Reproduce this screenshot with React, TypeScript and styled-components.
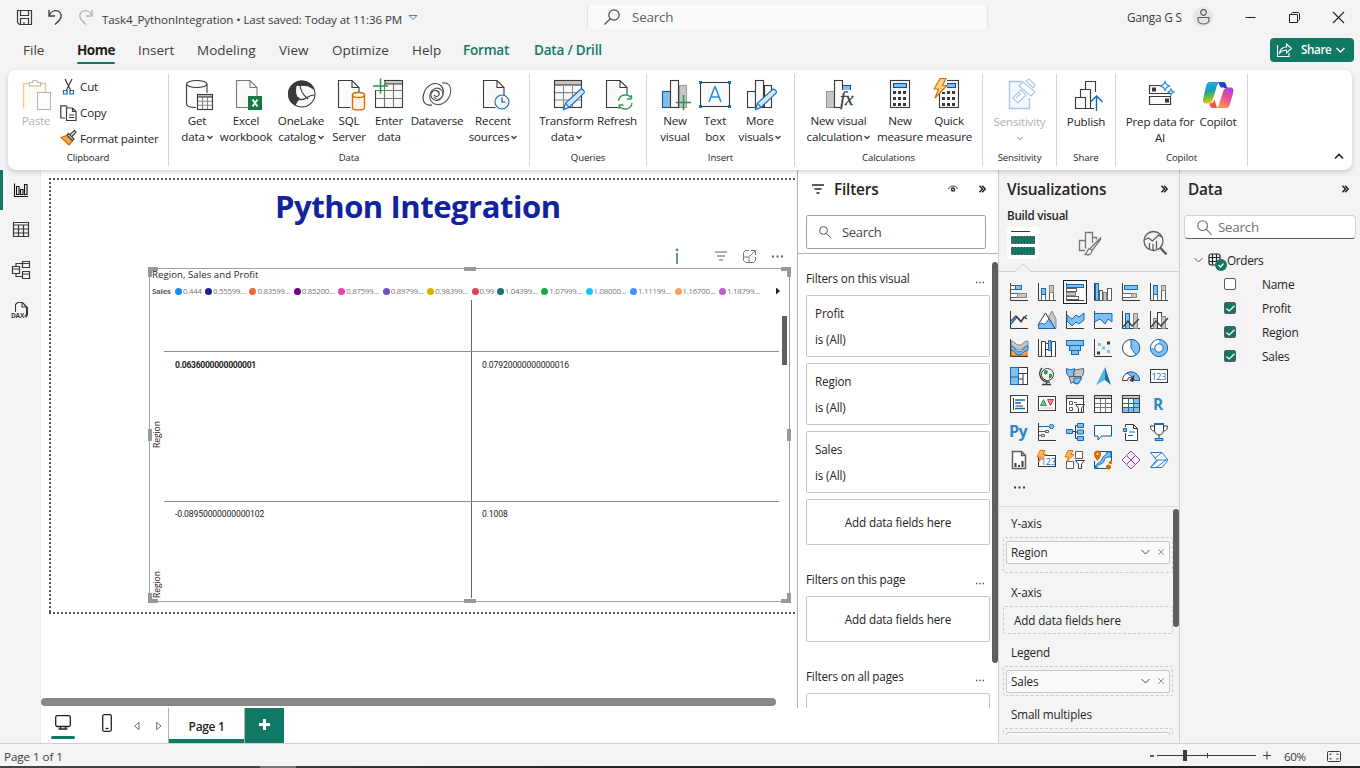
import React from "react";
import styled, { createGlobalStyle } from "styled-components";

const INK = "#252423";
const GREEN = "#117865";
const BLUE = "#0f6cbd";
const SKY = "#83beec";
const NAVY = "#005a9e";
const GREY = "#c8c6c4";
const DARK = "#3b3a39";
const ORANGE = "#d86c00";

const Global = createGlobalStyle`
  * { box-sizing: border-box; }
  html, body { margin: 0; padding: 0; height: 100%; overflow: hidden; }
  body { font-family: "Open Sans", "Noto Sans", sans-serif; font-size: 11.6px; color: ${INK}; letter-spacing: -0.2px; background: #f4f4f4; }
  svg { display: block; flex: none; overflow: visible; }
`;

const Window = styled.div`
  width: 1360px; height: 768px; display: flex; flex-direction: column; background: #f4f4f4; overflow: hidden;
`;

/* ---------- title bar ---------- */
const TitleBar = styled.header`
  display: flex; height: 34px; flex: none; white-space: nowrap;
`;
const QuickTools = styled.div`
  width: 587px; flex: none; display: flex; align-items: flex-start; padding: 8px 0 0 16px;
`;
const QuickIcon = styled.div<{ $w: number }>`width: ${p => p.$w}px; flex: none;`;
const DocName = styled.div<{ $w: number }>`
  width: ${p => p.$w}px; flex: none; line-height: 16px; padding-top: 4px; color: #3b3a39; letter-spacing: -0.11px;
`;
const TopSearch = styled.div`
  width: 401px; flex: none; height: 26px; margin-top: 4px; background: #fafafa; border-radius: 3px; display: flex; align-items: center;
  padding-left: 16px; gap: 12px; font-size: 13.4px; color: #605e5c; border: 1px solid #f4f4f4; border-left-color: #e4e4e4; border-right-color: #e4e4e4;
`;
const WindowArea = styled.div`flex: 1; display: flex; align-items: center; height: 34px; padding-left: 139px;`;
const UserName = styled.span`width: 66px; flex: none; font-size: 11.8px; color: #3b3a39;`;
const Avatar = styled.div`
  width: 20px; height: 20px; flex: none; border-radius: 50%; background: #e6e6e6; display: flex; align-items: center; justify-content: center; margin-right: 32px;
`;
const WinBtn = styled.div`width: 44px; flex: none; display: flex;`;

/* ---------- tabs ---------- */
const TabRow = styled.nav`display: flex; height: 36px; flex: none; padding: 4px 6px 0 23px; white-space: nowrap;`;
const Tab = styled.div<{ $w: number; $kind?: "on" | "ctx" }>`
  width: ${p => p.$w}px; font-size: 13.5px; line-height: 24px; letter-spacing: 0;
  color: ${p => (p.$kind === "ctx" ? GREEN : p.$kind === "on" ? "#201f1e" : "#424140")};
  font-weight: ${p => (p.$kind === "on" ? 700 : p.$kind === "ctx" ? 600 : 400)};
  ${p => p.$kind === "on" && "letter-spacing: -0.5px;"}
  ${p => p.$kind === "ctx" && "letter-spacing: -0.2px;"}
`;
const TabUnderline = styled.div`width: 38px; height: 2px; background: ${GREEN}; border-radius: 1px;`;
const ShareBtn = styled.button`
  margin-left: auto; width: 84px; height: 24px; border: 0; border-radius: 4px; background: ${GREEN}; color: #fff; display: flex;
  align-items: center; padding: 0 0 0 6px; font: 600 11.6px "Open Sans", sans-serif; letter-spacing: -0.35px;
`;
const ShareText = styled.span`margin: 0 5px 0 9px; line-height: 24px;`;

/* ---------- ribbon ---------- */
const Ribbon = styled.section`
  margin: 0 8px; height: 100px; flex: none; background: #fff; border-radius: 8px; display: flex; padding: 4px 0;
  box-shadow: 0 2px 5px rgba(0,0,0,.18); position: relative; z-index: 2;
`;
const Group = styled.div<{ $w: number }>`
  width: ${p => p.$w}px; height: 92px; border-right: 1px solid #d6d6d6; display: flex; flex-direction: column; flex: none;
`;
const GroupBody = styled.div`display: flex; height: 76px;`;
const GroupName = styled.div`text-align: center; font-size: 9.6px; line-height: 15px; letter-spacing: -0.1px;`;
const RBtn = styled.div<{ $w: number; $off?: boolean; $drop?: number; $shift?: number }>`
  width: ${p => p.$w}px; display: flex; flex-direction: column; align-items: center; flex: none; padding: 4px 0 0 ${p => p.$shift ?? 0}px;
  opacity: ${p => (p.$off ? 0.36 : 1)};
  svg + div { margin-top: ${p => p.$drop ?? 1}px; }
`;
const Line = styled.div`white-space: nowrap; line-height: 16px; display: flex; align-items: center; gap: 2px; height: 16px; letter-spacing: -0.2px;`;
const ClipList = styled.div`display: flex; flex-direction: column; padding: 0 0 0 2px;`;
const ClipItem = styled.div`display: flex; align-items: center; height: 26px; gap: 3px; white-space: nowrap; letter-spacing: -0.17px; & + & { position: relative; top: 1px; }`;
const Collapse = styled.div`flex: 1; display: flex; justify-content: flex-end; align-items: flex-end; padding: 0 8px 6px 0;`;

/* ---------- body ---------- */
const Body = styled.main`display: flex; height: 573px; flex: none;`;
const Rail = styled.aside`width: 41px; flex: none; display: flex; flex-direction: column; border-right: 1px solid #ececec;`;
const RailItem = styled.div<{ $on?: boolean }>`
  height: 40px; display: flex; align-items: center; padding-left: ${p => (p.$on ? 8 : 11)}px; border-left: ${p => (p.$on ? `3px solid ${GREEN}` : "0")};
`;
const Middle = styled.div`width: 957px; flex: none; background: #fff; display: flex; flex-direction: column;`;
const MiddleTop = styled.div`height: 538px; display: flex;`;
const Stage = styled.div`width: 756px; flex: none; height: 538px; padding: 8px 0 0 8px; display: flex; flex-direction: column; overflow: hidden;`;
const Sheet = styled.div`
  width: 748px; height: 436px; flex: none;
  padding-left: 2px;
  background:
    repeating-linear-gradient(90deg, #555 0 2px, transparent 2px 4px) 0 0 / 100% 2px no-repeat,
    repeating-linear-gradient(90deg, #555 0 2px, transparent 2px 4px) 0 100% / 100% 2px no-repeat,
    repeating-linear-gradient(180deg, #555 0 2px, transparent 2px 4px) 0 0 / 2px 100% no-repeat;
`;
const ReportTitle = styled.h1`
  margin: 0 0 0 224px; padding-top: 7px; width: 300px; font-size: 31px; line-height: 42px; font-weight: 700; color: #12239e; white-space: nowrap; letter-spacing: -0.45px;
`;
const VisualTools = styled.div`height: 24px; margin-top: 17px; padding-left: 624px; display: flex; align-items: center;`;
const ToolSlot = styled.div<{ $w: number }>`width: ${p => p.$w}px; flex: none;`;
const Visual = styled.div`
  position: relative; width: 641px; height: 334px; margin: 0 0 0 98px; border: 1px solid #a0a0a0; display: flex; flex-direction: column;
`;
const Handle = styled.i<{ $x: string; $y: string; $t: string }>`
  position: absolute; background: transparent; border: 0 solid #999;
  width: ${p => (p.$t === "h" ? 12 : p.$t === "v" ? 4 : 10)}px; height: ${p => (p.$t === "h" ? 4 : p.$t === "v" ? 12 : 10)}px;
  ${p => p.$x} ${p => p.$y}
  ${p => (p.$t === "h" || p.$t === "v" ? "background:#999;" : "")}
  ${p => (p.$t.includes("T") ? "border-top-width:4px;" : "")} ${p => (p.$t.includes("B") ? "border-bottom-width:4px;" : "")}
  ${p => (p.$t.includes("L") ? "border-left-width:4px;" : "")} ${p => (p.$t.includes("R") ? "border-right-width:4px;" : "")}
`;
const VisualTitle = styled.div`font-size: 9.6px; line-height: 12px; padding-left: 2px; letter-spacing: 0.06px; z-index: 1;`;
const Legend = styled.div`
  display: flex; align-items: center; height: 12px; margin-top: 4px; padding-left: 2px; font-family: "Open Sans", sans-serif; font-size: 7.8px; color: #777; white-space: nowrap; letter-spacing: -0.22px;
  b { width: 23px; flex: none; color: #605e5c; font-weight: 700; }
`;
const LegendItem = styled.span<{ $c: string; $w: number }>`
  width: ${p => p.$w}px; flex: none; display: flex; align-items: center; gap: 1px;
  &::before { content: ""; width: 7px; height: 7px; flex: none; border-radius: 50%; background: ${p => p.$c}; }
`;
const Matrix = styled.div`display: flex; margin-top: 3px; height: 298px;`;
const AxisCol = styled.div`width: 14px; margin-top: -1px; display: flex; flex-direction: column;`;
const AxisName = styled.div`
  height: 149px; writing-mode: vertical-rl; transform: rotate(180deg); font-size: 8.6px; line-height: 14px; letter-spacing: -0.1px; color: #222;
  & + & { height: 150px; }
`;
const CellGrid = styled.div`
  width: 615px; flex: none; display: grid; grid-template-columns: 307px 308px; grid-template-rows: 150px 148px;
  background: linear-gradient(#666, #666) 307px 0 / 1px 100% no-repeat;
`;
const Cell = styled.div<{ $b?: boolean }>`
  display: flex; flex-direction: column; font-family: Roboto, sans-serif; font-size: 8.6px; letter-spacing: ${p => (p.$b ? -0.3 : -0.12)}px; color: #222; font-weight: ${p => (p.$b ? 700 : 400)};
  &::before { content: ""; height: 51px; border-bottom: 1px solid #8c8c8c; }
  span { padding: 7px 0 0 11px; line-height: 12px; }
  &:nth-child(n+3)::before { height: 51px; }
  &:nth-child(n+3) span { padding-top: 6px; }
`;
const CellBar = styled.div`width: 5px; height: 49px; margin: 16px 0 0 3px; background: #605e5c;`;
const HScroll = styled.div`width: 735px; height: 8px; border-radius: 4px; background: #8a8886; margin: 84px 0 0 -8px; flex: none;`;

/* ---------- page tabs ---------- */
const PageBar = styled.div`height: 35px; display: flex; align-items: flex-start;`;
const ViewMode = styled.div<{ $w: number; $pad: number; $top: number }>`width: ${p => p.$w}px; padding: ${p => p.$top}px 0 0 ${p => p.$pad}px;`;
const ViewUnder = styled.div`width: 24px; height: 3px; border-radius: 1.5px; background: ${GREEN}; margin: 6px 0 0 -4px;`;
const PageTab = styled.div`
  width: 77px; height: 35px; border: solid #b3b0ad; border-width: 0 1px; box-shadow: inset 0 -4px 0 ${GREEN}; text-align: center; line-height: 37px; font-weight: 600; letter-spacing: -0.35px; font-size: 12px;
`;
const AddPage = styled.div`width: 39px; height: 35px; background: ${GREEN}; display: flex; align-items: center; justify-content: center; padding-bottom: 2px;`;

/* ---------- filters ---------- */
const Filters = styled.section`width: 201px; flex: none; height: 538px; border-left: 1px solid #b3b0ad; display: flex; flex-direction: column; overflow: hidden;`;
const PanelHead = styled.div`
  height: 38px; flex: none; display: flex; align-items: center; font-size: 15.4px; font-weight: 600; letter-spacing: -0.2px;
`;
const Grow = styled.div`flex: 1;`;
const FilterSearch = styled.div`
  margin: 7px 0 0 8px; width: 180px; height: 34px; flex: none; border: 1px solid #a19f9d; border-radius: 2px; display: flex; align-items: center; gap: 11px; padding-left: 12px; font-size: 13px; color: #484644; letter-spacing: -0.3px;
`;
const FilterScroll = styled.div`margin-top: 4px; flex: 1; border-top: 1px solid #b3b0ad; display: flex; overflow: hidden;`;
const FilterCol = styled.div`width: 184px; margin: 0 2px 0 8px; flex: none; display: flex; flex-direction: column; gap: 6px;`;
const Section = styled.div<{ $h: number }>`
  height: ${p => p.$h}px; flex: none; display: flex; align-items: flex-end; justify-content: space-between; padding: 0 6px 3px 0; line-height: 16px; letter-spacing: -0.16px; font-size: 11.7px;
  svg { margin-bottom: 2px; }
`;
const Card = styled.div<{ $h?: number }>`
  height: ${p => p.$h ?? 62}px; flex: none; border: 1px solid #c8c6c4; border-radius: 2px; display: flex; flex-direction: column; justify-content: center; padding: 0 8px ${p => (p.$h ? 0 : 1)}px; line-height: 26px; text-align: ${p => (p.$h ? "center" : "left")}; font-size: 11.7px; letter-spacing: -0.15px;
`;
const VBar = styled.div<{ $t: number; $h: number }>`width: 6px; height: ${p => p.$h}px; margin-top: ${p => p.$t}px; background: #605e5c; border-radius: 3px; flex: none;`;

/* ---------- visualizations ---------- */
const Viz = styled.section`width: 182px; border: solid #d0d0d0; border-width: 0 1px; flex: none; display: flex; flex-direction: column; overflow: hidden;`;
const BuildLabel = styled.div`font-weight: 600; padding-left: 8px; line-height: 16px; height: 16px; font-size: 11.6px; letter-spacing: -0.25px;`;
const ModeRow = styled.div`display: flex; justify-content: space-between; padding: 3px 8px 0 8px; height: 46px; align-items: flex-start;`;
const Mode = styled.div<{ $on?: boolean }>`width: 32px; height: 32px; border-radius: 3px; background: ${p => (p.$on ? "#fff" : "transparent")}; display: flex; align-items: center; justify-content: center;`;
const Notch = styled.div`height: 10px; margin-top: -7px;`;
const VizGrid = styled.div`display: grid; grid-template-columns: repeat(6, 28px); grid-auto-rows: 28px; padding: 5px 0 0 6px;`;
const VizCell = styled.div<{ $on?: boolean }>`
  display: flex; align-items: center; justify-content: center; width: 28px; height: 28px;
  svg { outline: ${p => (p.$on ? "1px solid #222" : "0")}; outline-offset: 1px; background: ${p => (p.$on ? "#fff" : "none")}; }
`;
const More = styled.div`height: 32px; padding: 12px 0 0 15px;`;
const Wells = styled.div`flex: none; height: 229px; border-top: 1px solid #dedede; display: flex; overflow: hidden;`;
const WellCol = styled.div`width: 170px; margin-left: 4px; flex: none;`;
const WellName = styled.div<{ $h: number }>`height: ${p => p.$h}px; padding: 0 8px 6px; display: flex; align-items: flex-end; line-height: 16px; font-size: 11.7px; letter-spacing: -0.14px;`;
const Well = styled.div<{ $h: number }>`height: ${p => p.$h}px; border: 1px dashed #ccc; border-radius: 2px; padding: 3px 2px; font-size: 11.7px; letter-spacing: -0.12px;`;
const WellItem = styled.div`height: 23px; border: 1px solid #c8c6c4; border-radius: 2px; background: #fafafa; display: flex; align-items: center; padding: 0 5px 1px 4px; gap: 8px; span { flex: 1; }`;
const WellHint = styled.div`line-height: 20px; padding-left: 8px;`;

/* ---------- data ---------- */
const DataPane = styled.section`width: 180px; display: flex; flex-direction: column;`;
const DataSearch = styled.div`
  margin: 7px 0 0 4px; width: 172px; height: 24px; background: #fff; border: 1px solid #d1d1d1; border-bottom-color: #616161; border-radius: 4px; display: flex; align-items: center; gap: 6px; padding-left: 12px; font-size: 13.3px; color: #707070; letter-spacing: -0.2px;
`;
const TableRow = styled.div`display: flex; align-items: center; height: 24px; padding-left: 14px; margin-top: 9px; font-size: 11.8px; letter-spacing: -0.32px;`;
const FieldRow = styled.div`display: flex; align-items: center; height: 24px; padding-left: 44px; gap: 26px; font-size: 11.9px; letter-spacing: -0.22px;`;
const Check = styled.div<{ $on: boolean }>`
  width: 12px; height: 12px; border-radius: 2px; border: 1px solid #5a5a5a; background: ${p => (p.$on ? GREEN : "#fff")}; display: flex; align-items: center; justify-content: center;
`;

/* ---------- status ---------- */
const Status = styled.footer`height: 23px; flex: none; border-top: 1px solid #d0d0d0; display: flex; align-items: center; padding: 3px 19px 0 4px; color: #3b3a39; letter-spacing: -0.05px;`;
const Slider = styled.div`margin: -3px -2px 0 0;`;
const Zoom = styled.span`width: 43px; margin-left: 13px; letter-spacing: -0.4px;`;
const Taskbar = styled.div`height: 2px; flex: none; background: linear-gradient(90deg, #444 0 260px, #777 260px 296px, #3a3a3a 296px, #222 600px);`;

/* ---------- icons ---------- */
const Big = ({ children }: { children: React.ReactNode }) => (
  <svg width="32" height="34" viewBox="0 0 32 34" fill="none" stroke={DARK} strokeWidth="1.1">{children}</svg>
);
const Doc = ({ x = 5.5 }: { x?: number }) => (
  <path d={`M${x + 12} 29.5H${x}V2.5h13.5l7 7V18M${x + 13.5} 2.5v7h7`} fill="#fafafa" />
);
const TableG = ({ x, y, s }: { x: number; y: number; s: number }) => (
  <g>
    <rect x={x} y={y} width={s} height={s} fill="#fafafa" stroke="none" />
    <path d={`M${x} ${y + s * 0.45}h${s}M${x} ${y + s * 0.72}h${s}M${x + s / 3} ${y + s / 5}v${s * 0.8}M${x + (2 * s) / 3} ${y + s / 5}v${s * 0.8}`} stroke="#8a8886" />
    <rect x={x} y={y} width={s} height={s / 6} fill={GREY} stroke="none" />
    <rect x={x} y={y} width={s} height={s} />
    <path d={`M${x} ${y + s / 6}h${s}`} />
  </g>
);
const Pencil = ({ dx = 0 }: { dx?: number }) => (
  <path transform={`translate(${dx} 0)`} d="M0.5 31.5l2-6.5L17.5 11.5c1.5-1.3 5 1.5 3.5 3.6L6 29.5zM2.5 25l3.5 4.5" fill="#cfe6f8" stroke={BLUE} />
);
const Calc = ({ x }: { x: number }) => (
  <g>
    <rect x={x} y="2.5" width="19" height="27" fill="#fafafa" />
    <rect x={x + 3} y="5.5" width="13" height="4" fill={SKY} stroke={NAVY} />
    {[13, 19, 25].map(y => [3, 8, 13].map(dx => <rect key={`${y}${dx}`} x={x + dx - 0.5} y={y} width="3" height="3" fill={DARK} stroke="none" />))}
  </g>
);
const Chev = ({ c = DARK }: { c?: string }) => (
  <svg width="6" height="5" viewBox="0 0 6 5" fill="none" stroke={c} strokeWidth="1.3"><path d="M0.5 1l2.5 2.5L5.5 1" /></svg>
);
const WideChev = ({ c = DARK, s = 1.2 }: { c?: string; s?: number }) => (
  <svg width="9" height="6" viewBox="0 0 9 6" fill="none" stroke={c} strokeWidth={s}><path d="M0.5 1l4 4 4-4" /></svg>
);
const DblChev = () => (
  <svg width="7" height="8" viewBox="0 0 7 8" fill="none" stroke={INK} strokeWidth="1.5"><path d="M0.5 .7L3.5 4 .5 7.3M3.2 .7L6.2 4 3.2 7.3" /></svg>
);
const Lens = ({ s, flip, c = "#484644" }: { s: number; flip?: boolean; c?: string }) => (
  <svg width={s} height={s} viewBox="0 0 16 16" fill="none" stroke={c} strokeWidth="1.2">
    <g transform={flip ? "translate(16 0) scale(-1 1)" : undefined}><circle cx="6" cy="6" r="5.2" /><path d="M9.7 9.7L15.5 15.5" /></g>
  </svg>
);
const Dots = ({ c = DARK, w = 11 }: { c?: string; w?: number }) => (
  <svg width={w} height="3" viewBox="0 0 11 3" fill={c}><path d="M0 .5h2v2H0zM4.5 .5h2v2h-2zM9 .5h2v2H9z" /></svg>
);
const X = ({ s, c = INK, w = 1 }: { s: number; c?: string; w?: number }) => (
  <svg width={s} height={s} viewBox="0 0 10 10" stroke={c} strokeWidth={w}><path d="M0 0l10 10M10 0L0 10" /></svg>
);

const ico = {
  getData: <Big><path d="M5.5 6v20c0 2 4 3.5 10 3.5V15h10V6z" fill="#fafafa" stroke="none" /><path d="M5.5 6v20c0 2 4 3.5 9.5 3.5M26 6v9" /><ellipse cx="15.7" cy="6" rx="10.2" ry="3.5" fill="#fafafa" /><TableG x={16.5} y={16.5} s={15} /></Big>,
  excel: <Big><g stroke="#797775"><Doc x={6.5} /></g><rect x="18" y="18" width="14" height="14" fill="#107c41" stroke="none" /><path d="M22.5 21.5l5 7M27.5 21.5l-5 7" stroke="#fff" strokeWidth="2" /></Big>,
  oneLake: <Big><circle cx="17" cy="16" r="13" fill="#fafafa" /><path d="M13 4C6 6 3.5 11 3.5 16c0 5 2.5 9 6.5 11 1-3 3-5 4-6-4-3-5-11-1-17z" fill={DARK} /><path d="M10 5c5-3.5 15-2 18 5.5-4-3-8-4-12-3-3 0-6-.5-6-2.5z" fill={DARK} /><path d="M15 6c0 6 3 11 8 15M11 19c4 4 8 3 12 0 3-2 4-2 6.5-2M10 26.5c1-4 2-5 4-7" /></Big>,
  sql: <Big><Doc x={5.5} /><path d="M19.5 17v13c0 2.5 12 2.5 12 0V17z" fill="#fff4e6" stroke={ORANGE} strokeWidth="1.4" /><ellipse cx="25.5" cy="17" rx="6" ry="2.5" fill="#fff" stroke={ORANGE} strokeWidth="1.4" /></Big>,
  enter: <Big><rect x="2.5" y="2.5" width="27" height="27" fill="#fafafa" /><path d="M2.5 12.5h27M2.5 20.5h27M11.5 6v23M20.5 6v23" stroke="#797775" /><path d="M12 2.5h17.5V6H12z" fill={GREY} /><rect x="1" y="1" width="10" height="11" fill="#fff" stroke="none" /><path d="M7.5 0.5v15M0 8h15" stroke="#1a9a42" strokeWidth="1.5" /></Big>,
  dataverse: <Big><path d="M11 27C3 28 .5 22 3 15 5 8 13 3 19 7c5 3 4 12-1 15-6 2-10-4-7-8 3-3 8-1 7 3-1 2-4 2-5 0" /><path d="M21 5c8-1 10 5 8 12-3 8-11 12-17 8-5-4-4-11 1-14 6-3 11 3 8 8-2 3-6 3-8 0" stroke="#605e5c" /></Big>,
  recent: <Big><Doc x={6.5} /><circle cx="25" cy="24" r="7" fill="#f3f9fd" stroke={BLUE} /><path d="M25 19.5V24h3.5" /></Big>,
  transform: <Big><TableG x={3.5} y={2.5} s={27} /><Pencil dx={12} /></Big>,
  refresh: <Big><Doc x={5.5} /><rect x="17" y="17" width="15" height="14" fill="#fff" stroke="none" /><path d="M17.5 23c1-7 10-8 13-2.5V17M30.5 21H26M31 25c-1 7-10 8-13 2.5V31M18 27h4.5" stroke="#2f9e4f" strokeWidth="1.4" /></Big>,
  newVisual: <Big><rect x="3.5" y="13.5" width="8" height="16" fill={SKY} stroke={NAVY} /><rect x="20.5" y="7.5" width="7" height="22" fill={GREY} stroke="#a19f9d" /><rect x="11.5" y="2.5" width="8" height="27" fill="#fafafa" /><path d="M24.5 17v15M17 24.5h15" stroke="#1a9a42" strokeWidth="1.5" /></Big>,
  textBox: <Big><rect x="1.5" y="4.5" width="29" height="24" fill="#fafafa" /><path d="M10 24l5.7-15h.6L22 24M12 19h8" stroke="#2b88d8" strokeWidth="1.5" />{[[0, 3], [29, 3], [0, 27], [29, 27]].map(([x, y]) => <rect key={`${x}${y}`} x={x} y={y} width="3" height="3" fill={BLUE} stroke="none" />)}</Big>,
  moreVisuals: <Big><rect x="3.5" y="13.5" width="8" height="16" fill="#fafafa" /><rect x="20.5" y="7.5" width="7" height="22" fill="#fafafa" /><rect x="11.5" y="2.5" width="8" height="27" fill="#fafafa" /><Pencil dx={11} /></Big>,
  calcVisual: <Big><rect x="3.5" y="13.5" width="8" height="16" fill={GREY} stroke="#979593" /><path d="M19.5 29V7.5h8V16" fill={SKY} stroke={NAVY} /><rect x="11.5" y="2.5" width="8" height="27" fill="#fafafa" /><rect x="17" y="12" width="15" height="19" fill="#fff" stroke="none" /><text x="17" y="27" fontFamily="Liberation Serif" fontStyle="italic" fontSize="19" fill={DARK} stroke={DARK} strokeWidth=".3">fx</text></Big>,
  newMeasure: <Big><Calc x={6.5} /></Big>,
  quick: <Big><Calc x={6.5} /><rect x="5" y="1" width="9" height="13" fill="#fff" stroke="none" /><path d="M7 .5h6L9.5 7.5H14L2 20l3.5-9H1z" fill="#ffd28a" stroke={ORANGE} /></Big>,
  sens: <Big><path d="M18 3.5H5.5v27h20V20" fill="#deecf9" stroke={BLUE} strokeWidth="1.4" /><path d="M9 20l8-8 5 5-8 8zM12 20l5-5M15 8l4-4 12 10-4 4zM22 3l3-2 6 6-2 3z" fill="#fff" stroke={BLUE} /></Big>,
  publish: <Big><path d="M5.5 19.5h10v11h-10zM10.5 19v-7.5h10v19h-5M15.5 11V3.5h10V14M20.5 30.5H24" fill="#fafafa" /><path d="M26.5 33V18M20.5 24l6-6 6 6" stroke={BLUE} strokeWidth="1.4" /></Big>,
  prep: <Big><path d="M17 7.5H5.5v8H27v-2M5.5 18.5h21v8h-21z" fill="#fafafa" strokeWidth="1.2" /><path d="M8 9.5h4v4H8zM21 20.5h4v4h-4z" fill={DARK} stroke="none" /><path d="M21 3.5l1.5 3 3 1.5-3 1.5-1.5 3-1.5-3-3-1.5 3-1.5zM27 11l1 2 2 1-2 1-1 2-1-2-2-1 2-1z" fill="#fff" stroke="#2b88d8" strokeWidth="1.2" /></Big>,
  copilot: (
    <svg width="32" height="34" viewBox="0 0 32 34">
      <defs>
        <linearGradient id="ca" x1="0" y1="0" x2=".2" y2="1"><stop offset="0" stopColor="#1fb6ee" /><stop offset=".45" stopColor="#1a9bb5" /><stop offset=".75" stopColor="#6bbf3f" /><stop offset="1" stopColor="#f5c400" /></linearGradient>
        <linearGradient id="cb" x1=".8" y1="0" x2=".3" y2="1"><stop offset="0" stopColor="#a347e8" /><stop offset=".45" stopColor="#e64f9a" /><stop offset="1" stopColor="#ff9a4c" /></linearGradient>
      </defs>
      <path d="M16 4h5c2.5 0 3 2 3.5 4 .4 1.5 1 2 2.5 2h-8z" fill="#1846c8" />
      <path d="M8 4h11c-3 0-4 3-5 7l-3 10c-.8 3-2 4.500-5 4.500H4c-3 0-3.5-2.500-2.600-5.500L4 8c.8-2.500 1.600-4 4-4z" fill="url(#ca)" />
      <path d="M24 30H13c3 0 4-3 5-7l3-9c.8-3 2-4.500 5-4.500h2.500c3 0 3.500 2.500 2.600 5.500L28 26c-.8 2.500-1.600 4-4 4z" fill="url(#cb)" />
      <path d="M15 30H11c-2.500 0-3-2-3.500-4-.2-.5-.5-.5-.5-.5 3 0 4.500-1 5.500-4z" fill="#f0554b" />
      <path d="M16 11l3-1.500h3L17.500 22.500h-4.500z" fill="#fff" />
    </svg>
  ),
};

const btn = (icon: React.ReactNode, w: number, a: string, b?: string, chev?: boolean) => ({ icon, w, a, b, chev });
const groups = [
  { name: "Data", w: 361, items: [btn(ico.getData, 56, "Get", "data", true), btn(ico.excel, 42, "Excel", "workbook"), btn(ico.oneLake, 68, "OneLake", "catalog", true), btn(ico.sql, 28, "SQL", "Server"), btn(ico.enter, 52, "Enter", "data"), btn(ico.dataverse, 44, "Dataverse"), btn(ico.recent, 68, "Recent", "sources", true)] },
  { name: "Queries", w: 117, items: [btn(ico.transform, 73, "Transform", "data", true), btn(ico.refresh, 28, "Refresh")] },
  { name: "Insert", w: 148, items: [btn(ico.newVisual, 56, "New", "visual"), btn(ico.textBox, 24, "Text", "box"), btn(ico.moreVisuals, 66, "More", "visuals", true)] },
  { name: "Calculations", w: 188, items: [btn(ico.calcVisual, 87, "New visual", "calculation", true), btn(ico.newMeasure, 36, "New", "measure"), btn(ico.quick, 62, "Quick", "measure")] },
  { name: "Sensitivity", w: 74, items: [btn(ico.sens, 73, "Sensitivity", "", true)] },
  { name: "Share", w: 59, items: [btn(ico.publish, 58, "Publish")] },
  { name: "Copilot", w: 132, items: [btn(ico.prep, 88, "Prep data for", "AI"), btn(ico.copilot, 28, "Copilot")] },
];

/* chart gallery, 20 × 20 each */
const AX = <path d="M1.5 1v17.5H19" />;
const B = { fill: SKY, stroke: BLUE };
const G = { fill: GREY, stroke: "#8a8886" };
const W = { fill: "#fff", stroke: "#605e5c" };
const bolt = <path d="M3 .5h5L6 4.5h3L1.5 12l2-5H0z" fill="#ffb45c" stroke={ORANGE} strokeWidth=".9" />;
const funnel = <path d="M10.5 10.5h9L16.5 14v4.5h-3V14z" fill="#fff" />;
const charts: React.ReactNode[] = [
  <>{AX}<rect x="1.5" y="3.5" width="5" height="4" {...W} /><rect x="6.5" y="3.5" width="6" height="4" {...B} /><rect x="1.5" y="11.5" width="7" height="4" {...W} /><rect x="8.5" y="11.5" width="9" height="4" {...G} /></>,
  <>{AX}<rect x="4.5" y="12.5" width="4" height="6" {...W} /><rect x="4.5" y="6.5" width="4" height="6" {...B} /><rect x="12.5" y="10.5" width="4" height="8" {...W} /><rect x="12.5" y="3.5" width="4" height="7" {...G} /></>,
  <>{AX}<rect x="1.5" y="2.5" width="17" height="3" {...B} /><rect x="1.5" y="6.5" width="10" height="3" {...W} /><rect x="1.5" y="10.5" width="9" height="3" {...G} /><rect x="1.5" y="14.5" width="12" height="3" {...W} /></>,
  <>{AX}<rect x="2.5" y="1.5" width="3" height="17" {...B} /><rect x="6.5" y="8.5" width="3" height="10" {...W} /><rect x="10.5" y="10.5" width="3" height="8" {...G} /><rect x="14.5" y="6.5" width="4" height="12" {...W} /></>,
  <>{AX}<rect x="3.5" y="3.5" width="13" height="4" {...B} /><rect x="1.5" y="11.5" width="9" height="4" {...W} /><rect x="10.5" y="11.5" width="5" height="4" {...G} /></>,
  <>{AX}<rect x="4.5" y="12.5" width="4" height="6" {...W} /><rect x="4.5" y="3.5" width="4" height="9" {...B} /><rect x="12.5" y="8.5" width="4" height="10" {...W} /><rect x="12.5" y="3.5" width="4" height="5" {...G} /></>,
  <>{AX}<path d="M2 14l6-7 4 4 6-6" stroke={BLUE} strokeWidth="1.3" /><path d="M2 11l5-5 5 6 3-5 3 2" strokeWidth="1.3" /></>,
  <><path d="M12 6l3-5 4 8v9.5H12z" {...G} /><path d="M1 15L8.5 3 18 18.5" fill="#fff" /><path d="M1.5 18.5V15l3-2 3 1.5L12 9l6 9.5z" {...B} /></>,
  <>{AX}<path d="M2 5l5 4 4-4 3 2 5-4v7l-5 4-3-2-4 4-5-5z" {...B} /></>,
  <>{AX}<path d="M1.5 3.5H19V12l-4-3-3 5-5-5-5.5 3z" {...B} /></>,
  <>{AX}<rect x="4.5" y="3.5" width="4" height="15" {...B} /><rect x="12.5" y="3.5" width="4" height="15" {...G} /><path d="M2 17l5-6 4 5 7-7" strokeWidth="1.3" /></>,
  <>{AX}<rect x="4.5" y="8.5" width="4" height="10" {...G} /><rect x="8.5" y="2.5" width="4" height="16" fill="#fff" /><rect x="12.5" y="6.5" width="4" height="12" {...G} /><path d="M2 17l5-6 5 5 7-8" strokeWidth="1.3" /></>,
  <><path d="M2 12l4 2h8l4-2v6H2z" fill="#f4a24a" stroke={ORANGE} /><path d="M2 3c4 0 4 4 8 4s4-4 9-4v5c-5 0-5 4-9 4s-4-4-8-4z" {...G} /><path d="M2 8c4 0 4 6 8 6s5-6 9-6v4c-4 0-5 5-9 5s-4-5-8-5z" {...B} />{AX}</>,
  <>{AX}<path d="M4.5 18.5v-15h4v15M14.5 18.5v-15h4v15" fill="#fff" /><path d="M8.5 5.5h3v6h-3z" fill="#fff" /><path d="M11.5 2.5h2.500v10h-2.500z" {...B} /></>,
  <><rect x="1.5" y="2.5" width="17" height="5" {...B} /><rect x="4.5" y="7.5" width="11" height="5" {...B} /><rect x="6.5" y="12.5" width="7" height="4" {...B} /></>,
  <>{AX}<g stroke="none"><path d="M5 5h3v3H5zM9 8.500h3v3H9z" fill="#83beec" /><path d="M14 3.500h3v3h-3zM4 13.500h3v3H4z" fill={DARK} /><path d="M14 12h3v3h-3z" fill="#83beec" /></g></>,
  <><circle cx="10" cy="10" r="8.5" fill="#fff" /><path d="M10 10V1.500A8.500 8.500 0 0 1 15 17z" {...B} /></>,
  <><circle cx="10" cy="10" r="6.5" stroke={SKY} strokeWidth="4.5" /><path d="M10 3.500A6.500 6.500 0 0 0 3.500 10" stroke="#fff" strokeWidth="4" /><circle cx="10" cy="10" r="8.6" stroke={BLUE} /><circle cx="10" cy="10" r="4.2" stroke={BLUE} /></>,
  <><rect x="1.5" y="1.5" width="17" height="17" fill="#fff" /><path d="M1.5 1.5h8v17h-8zM1.5 11h8" {...B} /><path d="M9.5 7.5h9M14 7.5v11M9.5 13h4.5" /></>,
  <><circle cx="10.5" cy="8.5" r="6" fill="#fff" /><path d="M7 5c2-2 4-1 4 1S8 9 7 8zM12 8c2-1 4 0 3 3l-3 2z" fill="#2f9e4f" stroke="none" /><path d="M5 2C0 8 4 17 13 16M9.500 16v2.500M5 18.500h9" strokeWidth="1.3" /></>,
  <><path d="M1.500 2.500c4 2 5 1 8 0l-1 8H4C2 9 1 6 1.500 2.500z" {...B} /><path d="M9.500 4l9-1.500c.5 4 0 7-2 8l-8 .5z" fill={GREY} stroke="#605e5c" /><path d="M4 10.500h12l-2 6-3 1.500-3-2-2 1.500z" fill={GREY} stroke="#605e5c" /><path d="M9 12h8l-4 6-4-1z" {...B} /></>,
  <><path d="M12 1L3 19l9-5z" fill="#59b4e6" stroke="none" /><path d="M12 1l6 18-6-5z" fill="#1d6fa5" stroke="none" /></>,
  <><path d="M1.500 14.500a8.500 8.500 0 0 1 17 0h-5a3.500 3.500 0 0 0-7 0z" fill="#fff" /><path d="M6 7a8.500 8.500 0 0 1 12.500 7.500h-5L12 11.500z" {...B} /><path d="M9 14.500l4-5 -1 6z" fill={DARK} /></>,
  <><rect x="1.5" y="3.5" width="17" height="13" fill="#fff" /><text x="2.5" y="13.5" fontSize="9" fontFamily="Open Sans" fill={BLUE} stroke="none" letterSpacing="-.3">123</text></>,
  <><rect x="1.5" y="1.5" width="17" height="17" fill="#fff" /><path d="M4.500 4v12M6.500 12H14" stroke={DARK} /><path d="M6 6h10M6 9h6M6 14.500h10" stroke={BLUE} strokeWidth="1.6" /></>,
  <><rect x="1.5" y="2.5" width="17" height="14" fill="#fff" /><path d="M3.500 11.500l3-6 3 6z" fill="#7bc48c" stroke="#2f9e4f" /><path d="M10.500 5.500h6l-3 6z" fill="#f08a8a" stroke="#d13438" /><path d="M4 14h12" stroke={GREY} /></>,
  <><rect x="1.5" y="1.5" width="17" height="17" fill="#fff" /><path d="M1.500 1.500h17v3h-17z" fill={GREY} /><path d="M4.500 7.500h3v3h-3zM4.500 13.500h3v3h-3zM9 8.500h3" stroke="#605e5c" />{funnel}</>,
  <><rect x="1.5" y="1.5" width="17" height="17" fill="#fff" /><path d="M7.500 5v13.500M12.500 5v13.500M2 9.500h17M2 13.500h17" stroke="#797775" /><path d="M1.500 1.500h17v3h-17z" fill={GREY} /><rect x="1.5" y="1.5" width="17" height="17" /></>,
  <><rect x="1.5" y="1.5" width="17" height="17" fill="#fff" /><path d="M13 5h5.500v13.500h-17V14H13z" fill={SKY} stroke="none" /><path d="M7.500 5v13.500M12.500 5v13.500M2 9.500h17M2 13.500h17" stroke={BLUE} /><path d="M1.500 1.500h17v3h-17z" fill={GREY} /><rect x="1.5" y="1.5" width="17" height="17" /></>,
  <text x="4" y="15.5" fontSize="15.5" fontWeight="700" fontFamily="Open Sans" fill="#2b88c8" stroke="none">R</text>,
  <text x="0" y="15" fontSize="16" fontWeight="700" fontFamily="Open Sans" fill="#2b88c8" stroke="none" letterSpacing="-.5">Py</text>,
  <>{AX}<path d="M2 9.500h7M2 13.500h3" stroke="#605e5c" /><path d="M2 4.500h10" stroke={BLUE} /><circle cx="14.500" cy="4.500" r="2.200" {...B} /><path d="M8.500 8.500h3v2h-3zM4.500 12.500h3v2h-3z" fill="#fff" stroke="#605e5c" /></>,
  <><path d="M7 9.500h3.500M12 3.500h-1.500v13H12M10.500 10H12" /><path d="M1.500 7.500h6v4h-6zM12.500 1.500h6v4h-6zM12.500 8h6v4h-6zM12.500 14.500h6v4h-6z" {...B} /></>,
  <path d="M1.500 3.500h17v10.500H8.500L5 18v-4H1.500z" fill="#fff" stroke={NAVY} />,
  <><path d="M4.500 5V2.500h8l4 4v12h-12V11M12.500 2.500v4h4" fill="#fff" /><path d="M2.500 6.500h3v3h-3z" {...B} /><path d="M8 10h6M7 13.500h5" stroke={BLUE} /></>,
  <><path d="M5.500 1.500h9V8c0 3-2 5-4.500 5S5.500 11 5.500 8zM5.500 4H1.500c0 4 2 5 4 5M14.500 4h4c0 4-2 5-4 5M10 13v3" fill="#fff" /><path d="M5.500 1.500h9v1h-9zM6 16.500h8v2H6z" {...B} /></>,
  <><path d="M3.500 1.500h9l4 4v13h-13zM12.500 1.500v4h4" fill="#fff" stroke="#605e5c" strokeWidth="1.5" /><path d="M6.500 17v-4M10 17v-2M13.500 17v-6" strokeWidth="2" /></>,
  <><rect x="1.5" y="5.5" width="17" height="11" fill="#fff" /><text x="4" y="15" fontSize="9" fontFamily="Open Sans" fill={BLUE} stroke="none" letterSpacing="-.3">123</text>{bolt}</>,
  <><path d="M10.500 1.500h7v7h-7zM1.500 11.500h7v7h-7z" fill="#fff" stroke="#605e5c" />{funnel}{bolt}</>,
  <><path d="M6 1.500h12.500V11M1.500 11v7.500H14" stroke={NAVY} fill="none" /><path d="M4 18c0-5 6-3 7-7s3-4 7-4V2h-4c0 4-4 3-5 7s-6 3-7 9z" {...B} /><path d="M4.500 11C1 7 1 5 1 4a3.500 3.500 0 0 1 7 0c0 1 0 3-3.500 7z" fill={ORANGE} stroke="none" /><circle cx="4.500" cy="4" r="1" fill="#fff" stroke="none" /><circle cx="17.500" cy="12.500" r="1.700" fill={ORANGE} stroke="none" /><circle cx="15.500" cy="17" r="2.500" fill={ORANGE} stroke="none" /></>,
  <path d="M10 1l4.500 4.500L10 10 5.500 5.500zM14.500 5.500L19 10l-4.500 4.500L10 10zM5.500 5.500L10 10l-4.500 4.500L1 10zM10 10l4.500 4.500L10 19l-4.500-4.500z" fill="#fbeffc" stroke="#8c3a9e" />,
  <path d="M1.500 2.500h11.500l6 7.500-6 7.500H1.500L7.500 10zM6 8l7-5.500M7.500 10H19M2 17l7-6.500M8 17l9-7" fill="#fff" stroke="#1a7fd6" />,
];

const legend: [string, string, number][] = [
  ["0.444", "#118dff", 30], ["0.55599...", "#12239e", 44.4], ["0.83599...", "#e66c37", 44.4], ["0.85200...", "#6b007b", 44.4],
  ["0.87599...", "#e044a7", 44.5], ["0.89799...", "#744ec2", 44.5], ["0.98399...", "#d9b300", 44.4], ["0.99", "#d64550", 25.2],
  ["1.04399...", "#197278", 44.4], ["1.07999...", "#1aab40", 44.4], ["1.08000...", "#15c6f4", 44.5], ["1.11199...", "#4092ff", 44.5],
  ["1.16700...", "#ffa058", 44.5], ["1.18799...", "#be5dc9", 57],
];

const FieldPill = ({ name }: { name: string }) => (
  <WellItem><span>{name}</span><WideChev c="#484644" s={1} /><X s={6} c="#8a8886" w={1.5} /></WellItem>
);

export default function App() {
  return (
    <Window>
      <Global />
      <TitleBar>
        <QuickTools>
          <QuickIcon $w={32}><svg width="17" height="18" viewBox="0 0 17 18" fill="none" stroke={DARK} strokeWidth="1.2"><path d="M1.500 2.500h14v14h-12l-2-2zM4.500 2.500v5h8v-5M4.500 16.500v-6h8v6M8 14v2.500" /></svg></QuickIcon>
          <QuickIcon $w={30}><svg width="15" height="18" viewBox="0 0 15 18" fill="none" stroke={DARK} strokeWidth="1.3"><path d="M1 2v6h6M1 8c2-5 6-6 9-5 4 2 4 6 1.500 9L7 16.500" /></svg></QuickIcon>
          <QuickIcon $w={24}><svg width="15" height="18" viewBox="0 0 15 18" fill="none" stroke="#b5b3b1" strokeWidth="1.3"><path d="M14 2v6H8M14 8c-2-5-6-6-9-5-4 2-4 6-1.500 9L8 16.500" /></svg></QuickIcon>
          <DocName $w={306}>Task4_PythonIntegration&nbsp;• Last saved: Today at 11:36 PM</DocName>
          <svg width="10" height="18" viewBox="0 0 10 18" fill="none" stroke="#3a86c0"><path d="M1 7.500h8L5 11.500z" /></svg>
        </QuickTools>
        <TopSearch><Lens s={16} flip />Search</TopSearch>
        <WindowArea>
          <UserName>Ganga G S</UserName>
          <Avatar><svg width="13" height="16" viewBox="0 0 13 16" fill="none" stroke="#605e5c" strokeWidth="1.2"><circle cx="6.500" cy="3.500" r="2.800" /><path d="M1 8.500h11v2c0 6-11 6-11 0z" /></svg></Avatar>
          <WinBtn><svg width="11" height="11" viewBox="0 0 11 11" stroke={INK}><path d="M.5 5.500h10" /></svg></WinBtn>
          <WinBtn><svg width="11" height="11" viewBox="0 0 11 11" fill="none" stroke={INK}><path d="M.5 2.500h8v8h-8zM2.500 2.500V1.500l1-1h6l1 1v6l-1 1H8.500" /></svg></WinBtn>
          <WinBtn><X s={11} /></WinBtn>
        </WindowArea>
      </TitleBar>

      <TabRow>
        <Tab $w={54}>File</Tab>
        <Tab $w={61} $kind="on">Home<TabUnderline /></Tab>
        <Tab $w={59}>Insert</Tab>
        <Tab $w={82}>Modeling</Tab>
        <Tab $w={53}>View</Tab>
        <Tab $w={80}>Optimize</Tab>
        <Tab $w={51}>Help</Tab>
        <Tab $w={71} $kind="ctx">Format</Tab>
        <Tab $w={80} $kind="ctx">Data / Drill</Tab>
        <ShareBtn>
          <svg width="16" height="14" viewBox="0 0 16 14" fill="none" stroke="#fff" strokeWidth="1.1"><path d="M1.500 2v11.500h11.500V10M3.500 10c1-5 4-6 7-6V1l5 4.500-5 4.500V7c-3 0-5 1-7 3z" /></svg>
          <ShareText>Share</ShareText>
          <WideChev c="#fff" s={1.4} />
        </ShareBtn>
      </TabRow>

      <Ribbon>
        <Group $w={161}>
          <GroupBody>
            <RBtn $w={50} $off $shift={6}>
              <Big><path d="M3.500 30.500V5.500h22v10" fill="#fff4e6" stroke={ORANGE} strokeWidth="1.4" /><path d="M9.500 8V4.500h3c0-3 5-3 5 0h3V8z" fill="#fff" /><rect x="17.500" y="14.500" width="13" height="17" fill="#fafafa" /></Big>
              <Line>Paste</Line>
            </RBtn>
            <ClipList>
              <ClipItem><svg width="17" height="16" viewBox="0 0 17 16" fill="none" stroke={DARK} strokeWidth="1.2"><path d="M5 0l5.500 11M12 0L6.500 11" /><path d="M3.500 11.500h3.500v3.500H3.500zM10 11.500h3.500v3.500H10z" stroke={BLUE} /></svg>Cut</ClipItem>
              <ClipItem><svg width="17" height="16" viewBox="0 0 17 16" fill="none" stroke={DARK} strokeWidth="1.2"><path d="M5 13H.8V.8H6l1.500 1.500" /><path d="M6.500 3h6l3.500 3.500V15.500H6.500zM12.500 3v3.500H16M9 10h5M9 12.500h5" fill="#fff" /></svg>Copy</ClipItem>
              <ClipItem><svg width="17" height="16" viewBox="0 0 17 16" fill="none" stroke={DARK} strokeWidth="1.2"><path d="M1 7.500l6-2 5.500 5.500L9 15z" fill="#f9a64a" stroke={ORANGE} /><path d="M7 5l1.500-1.500 5.500 5.500L12.500 10.500zM10 4.500l4.500-4 1.500 1.500-4 4.500" fill="#fff" /></svg>Format painter</ClipItem>
            </ClipList>
          </GroupBody>
          <GroupName>Clipboard</GroupName>
        </Group>
        {groups.map(g => (
          <Group key={g.name} $w={g.w}>
            <GroupBody>
              {g.items.map((it, i) => (
                <RBtn key={i} $w={it.w} $off={g.name === "Sensitivity"} $drop={["Sensitivity", "Share", "Copilot"].includes(g.name) ? 2 : 1}>
                  {it.icon}
                  <Line>{it.a}</Line>
                  {it.b !== undefined && <Line>{it.b}{it.chev && <Chev />}</Line>}
                </RBtn>
              ))}
            </GroupBody>
            <GroupName>{g.name}</GroupName>
          </Group>
        ))}
        <Collapse><svg width="10" height="7" viewBox="0 0 10 7" fill="none" stroke={INK} strokeWidth="1.6"><path d="M1 5.500l4-4 4 4" /></svg></Collapse>
      </Ribbon>

      <Body>
        <Rail>
          <RailItem $on><svg width="20" height="20" viewBox="0 0 20 20" fill="none" stroke="#111" strokeWidth="1.1"><path d="M3.500 3.500v13H17M5.500 6.500h2.500v8H5.500zM9.500 9.500H12v5H9.500zM13.500 4.500H16v10h-2.500z" /></svg></RailItem>
          <RailItem><svg width="20" height="20" viewBox="0 0 20 20" fill="none" stroke={DARK} strokeWidth="1.2"><path d="M2.500 2.500h15v14h-15zM2.500 5h15M2.500 9h15M2.500 13h15M7.500 5v11.500M12.500 5v11.500" /></svg></RailItem>
          <RailItem><svg width="20" height="20" viewBox="0 0 20 20" fill="none" stroke={DARK} strokeWidth="1.2"><path d="M1.500 6.500h7v7h-7zM1.500 9h7M11.500 1.500h7v6h-7zM11.500 3.500h7M11.500 11.500h7v7h-7zM11.500 14h7M5 6.500V3.500h6.500M5 13.500v3h6.500" /></svg></RailItem>
          <RailItem><svg width="20" height="20" viewBox="0 0 20 20" fill="none" stroke={DARK} strokeWidth="1.1"><path d="M4.500 12V4.500l2-2h5l4 4V14c0 1.500-1 2-2 2.500M11 3v4h4.500M13 4.500l3.500 3v7l-1.500 3" /><text x="0" y="17.5" fontSize="6.5" fontWeight="700" fontFamily="Open Sans" fill={DARK} stroke="none" letterSpacing="-.2">DAX</text></svg></RailItem>
        </Rail>

        <Middle>
          <MiddleTop>
            <Stage>
              <Sheet>
                <ReportTitle>Python Integration</ReportTitle>
                <VisualTools>
                  <ToolSlot $w={40}><svg width="4" height="16" viewBox="0 0 4 16" fill="#6a8caf"><circle cx="2" cy="1.700" r="1.500" /><path d="M1 5h2v11H1z" /></svg></ToolSlot>
                  <ToolSlot $w={28}><svg width="12" height="10" viewBox="0 0 12 10" stroke="#605e5c" strokeWidth="1.2"><path d="M0 1h12M2 5h8M4 9h4" /></svg></ToolSlot>
                  <ToolSlot $w={28}><svg width="13" height="13" viewBox="0 0 13 13" fill="none" stroke="#7a7876"><path d="M6 .5H2.500l-2 2v8l2 2h8l2-2V7M8 .5h4.500V5M12.500 .5L6.500 6.500M.5 7h5.500v5.500" /></svg></ToolSlot>
                  <ToolSlot $w={1} />
                  <Dots c="#605e5c" />
                </VisualTools>
                <Visual>
                  <Handle $t="TL" $x="left:-2px;" $y="top:-2px;" />
                  <Handle $t="TR" $x="right:-2px;" $y="top:-2px;" />
                  <Handle $t="BL" $x="left:-2px;" $y="bottom:-2px;" />
                  <Handle $t="BR" $x="right:-2px;" $y="bottom:-2px;" />
                  <Handle $t="h" $x="left:314px;" $y="top:-2px;" />
                  <Handle $t="h" $x="left:314px;" $y="bottom:-2px;" />
                  <Handle $t="v" $x="left:-2px;" $y="top:160px;" />
                  <Handle $t="v" $x="right:-2px;" $y="top:160px;" />
                  <VisualTitle>Region, Sales and Profit</VisualTitle>
                  <Legend>
                    <b>Sales</b>
                    {legend.map(([t, c, w]) => <LegendItem key={t} $c={c} $w={w}>{t}</LegendItem>)}
                    <svg width="5" height="8" viewBox="0 0 5 8" fill="#222"><path d="M0 .5L4 4 0 7.500z" /></svg>
                  </Legend>
                  <Matrix>
                    <AxisCol><AxisName>Region</AxisName><AxisName>Region</AxisName></AxisCol>
                    <CellGrid>
                      <Cell $b><span>0.0636000000000001</span></Cell>
                      <Cell><span>0.07920000000000016</span></Cell>
                      <Cell><span>-0.08950000000000102</span></Cell>
                      <Cell><span>0.1008</span></Cell>
                    </CellGrid>
                    <CellBar />
                  </Matrix>
                </Visual>
              </Sheet>
              <HScroll />
            </Stage>

            <Filters>
              <PanelHead>
                <ToolSlot $w={36}><svg width="36" height="10" viewBox="-14 0 36 10" stroke={INK} strokeWidth="1.3"><path d="M0 1h12M2.500 5h7M4.500 9h3" /></svg></ToolSlot>
                Filters
                <Grow />
                <svg width="10" height="8" viewBox="0 0 10 8" fill="none" stroke={DARK}><path d="M.5 4c1.500-4 7.500-4 9 0" /><circle cx="5" cy="4.500" r="1.500" strokeWidth="1.6" /></svg>
                <ToolSlot $w={21} />
                <DblChev />
                <ToolSlot $w={12} />
              </PanelHead>
              <FilterSearch><Lens s={12} />Search</FilterSearch>
              <FilterScroll>
                <FilterCol>
                  <Section $h={35}>Filters on this visual<Dots c="#605e5c" w={8} /></Section>
                  {["Profit", "Region", "Sales"].map(n => <Card key={n}><div>{n}</div><div>is (All)</div></Card>)}
                  <Card $h={46}>Add data fields here</Card>
                  <Section $h={39}>Filters on this page<Dots c="#605e5c" w={8} /></Section>
                  <Card $h={46}>Add data fields here</Card>
                  <Section $h={39}>Filters on all pages<Dots c="#605e5c" w={8} /></Section>
                  <Card $h={46} />
                </FilterCol>
                <VBar $t={8} $h={401} />
              </FilterScroll>
            </Filters>
          </MiddleTop>

          <PageBar>
            <ViewMode $w={60} $pad={14} $top={7}>
              <svg width="16" height="15" viewBox="0 0 16 15" fill="none" stroke="#222" strokeWidth="1.3"><rect x=".7" y=".7" width="14.6" height="10.8" rx="1.5" /><path d="M5.500 11.500v2.500M10.500 11.500v2.500M3.500 14h9" /></svg>
              <ViewUnder />
            </ViewMode>
            <ViewMode $w={33} $pad={1} $top={6}><svg width="10" height="18" viewBox="0 0 10 18" fill="none" stroke="#222" strokeWidth="1.3"><rect x=".7" y=".7" width="8.6" height="16.6" rx="1.5" /><path d="M3.500 14.500h3" /></svg></ViewMode>
            <ViewMode $w={22} $pad={0} $top={14}><svg width="6" height="8" viewBox="0 0 6 8" fill="none" stroke="#605e5c" strokeWidth=".9"><path d="M5 .2v7.600L.7 4z" /></svg></ViewMode>
            <ViewMode $w={12} $pad={0} $top={14}><svg width="6" height="8" viewBox="0 0 6 8" fill="none" stroke="#605e5c" strokeWidth=".9"><path d="M.7 .2v7.600L5 4z" /></svg></ViewMode>
            <PageTab>Page 1</PageTab>
            <AddPage><svg width="11" height="11" viewBox="0 0 11 11" stroke="#fff" strokeWidth="3"><path d="M5.500 0v11M0 5.500h11" /></svg></AddPage>
          </PageBar>
        </Middle>

        <Viz>
          <PanelHead><ToolSlot $w={8} />Visualizations<Grow /><DblChev /><ToolSlot $w={11} /></PanelHead>
          <BuildLabel>Build visual</BuildLabel>
          <ModeRow>
            <Mode $on><svg width="24" height="26" viewBox="0 0 24 26" fill={GREEN} stroke={DARK}><path d="M0 1.500h19" /><rect x=".5" y="6.500" width="23" height="7" strokeDasharray="2 1" /><rect x=".5" y="17.500" width="23" height="7" strokeDasharray="2 1" /></svg></Mode>
            <Mode><svg width="24" height="26" viewBox="0 0 24 26" fill="none" stroke="#797775" strokeWidth="1.3"><path d="M8 20.500H2.500v-10h6v8M8.500 10V2.500h7V13M15.500 7.500h4v2" /><path d="M23.500 8L13 18.500l2 2 8.500-11zM13 18.500c-3 0-2 4-5 6 3 1 7 0 7-4" fill="#f4f4f4" /></svg></Mode>
            <Mode><svg width="24" height="26" viewBox="0 0 24 26" fill="none" stroke="#605e5c" strokeWidth="1.3"><circle cx="10.500" cy="11" r="9.500" /><path d="M1 10l4.500-2 4 3 6-6 3 2M6.500 13v6M10 14v6M13.500 11v8" /><path d="M17.500 18l6 6.500" strokeWidth="2.5" /></svg></Mode>
          </ModeRow>
          <Notch><svg width="180" height="9" viewBox="0 0 180 9" fill="none" stroke="#d0d0d0"><path d="M0 8.500h16l8-7.500 8 7.500h148" /></svg></Notch>
          <VizGrid>
            {charts.map((c, i) => (
              <VizCell key={i} $on={i === 2}><svg width="20" height="20" viewBox="0 0 20 20" fill="none" stroke={DARK}>{c}</svg></VizCell>
            ))}
          </VizGrid>
          <More><Dots c={DARK} /></More>
          <Wells>
            <WellCol>
              <WellName $h={30}>Y-axis</WellName>
              <Well $h={36}><FieldPill name="Region" /></Well>
              <WellName $h={33}>X-axis</WellName>
              <Well $h={28}><WellHint>Add data fields here</WellHint></Well>
              <WellName $h={32}>Legend</WellName>
              <Well $h={30}><FieldPill name="Sales" /></Well>
              <WellName $h={32}>Small multiples</WellName>
              <Well $h={30}><FieldPill name="" /></Well>
            </WellCol>
            <VBar $t={2} $h={118} />
          </Wells>
        </Viz>

        <DataPane>
          <PanelHead><ToolSlot $w={8} />Data<Grow /><DblChev /><ToolSlot $w={11} /></PanelHead>
          <DataSearch><Lens s={15} c="#707070" />Search</DataSearch>
          <TableRow>
            <WideChev c="#605e5c" s={1} />
            <ToolSlot $w={24}>
              <svg width="24" height="20" viewBox="0 0 24 20" fill="none" stroke="#222" strokeWidth="1.2"><rect x="6" y="4" width="11" height="11" rx="2" /><path d="M6 7.500h11M6 11.500h11M9.500 4v11M13.500 4v11" /><circle cx="18" cy="15" r="6" fill={GREEN} stroke="none" /><path d="M15.500 15l2 2 3-3.500" stroke="#fff" /></svg>
            </ToolSlot>
            Orders
          </TableRow>
          {["Name", "Profit", "Region", "Sales"].map((n, i) => (
            <FieldRow key={n}>
              <Check $on={i > 0}>{i > 0 && <svg width="9" height="7" viewBox="0 0 9 7" fill="none" stroke="#fff" strokeWidth="1.2"><path d="M.5 3.500L3.200 6 8.500 .8" /></svg>}</Check>{n}
            </FieldRow>
          ))}
        </DataPane>
      </Body>

      <Status>
        Page 1 of 1
        <Grow />
        <Slider><svg width="124" height="13" viewBox="0 0 124 13" stroke={DARK}><path d="M1 7h4" strokeWidth="1.6" /><path d="M8 6.500h99M58.500 4v5M114 6.500h8M118 2.500v8" /><path d="M36 1v11" strokeWidth="4" /></svg></Slider>
        <Zoom>60%</Zoom>
        <svg width="14" height="11" viewBox="0 0 14 11" fill="none" stroke={DARK}><rect x=".5" y=".5" width="13" height="10" rx="1" /><path d="M3 4V3h1.500M9.500 3H11v1M11 7v1H9.500M4.500 8H3V7" /></svg>
      </Status>
      <Taskbar />
    </Window>
  );
}
